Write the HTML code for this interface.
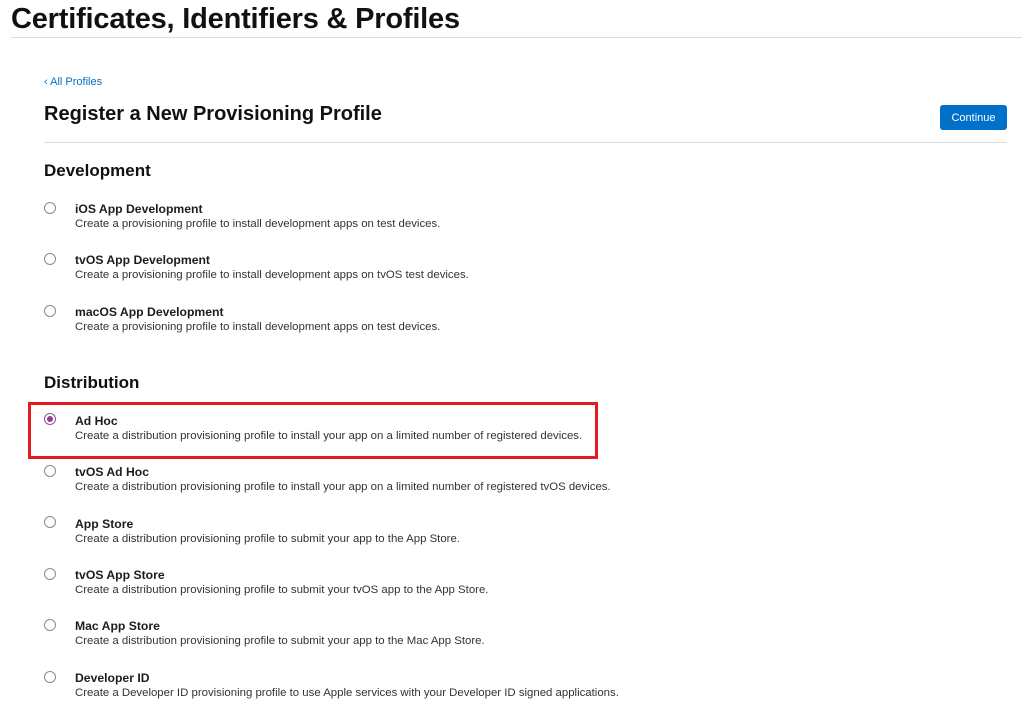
<!DOCTYPE html>
<html><head><meta charset="utf-8"><style>
body{margin:0;width:1024px;height:712px;background:#fff;font-family:"Liberation Sans",Arial,sans-serif;color:#111;position:relative;overflow:hidden}
.a{position:absolute;white-space:nowrap}
.h1{left:11px;top:3px;font-size:29px;font-weight:bold;letter-spacing:-0.2px}
.t{font-size:12.2px;font-weight:bold;color:#1d1d1f;margin-top:1px}
.d{font-size:11.4px;color:#333}
.r{position:absolute;left:44px;width:10px;height:10px;border:1px solid #8a8a8a;border-radius:50%;background:#fff}
.sec{font-size:17px;font-weight:bold}
</style></head><body>
<div class="a h1">Certificates, Identifiers &amp; Profiles</div>
<div class="a" style="left:11px;top:37px;width:1011px;height:1px;background:#ddd"></div>
<div class="a" style="left:44px;top:76px;font-size:11px;color:#0070c9">‹ All Profiles</div>
<div class="a" style="left:44px;top:103px;font-size:20px;font-weight:bold">Register a New Provisioning Profile</div>
<div class="a" style="left:940px;top:105px;width:67px;height:25px;background:#0070c9;border-radius:3px;color:#fff;font-size:11px;line-height:27px;text-align:center">Continue</div>
<div class="a" style="left:44px;top:142px;width:963px;height:1px;background:#ddd"></div>
<div class="a sec" style="left:44px;top:161px">Development</div>

<div class="r" style="top:202px"></div>
<div class="a t" style="left:75px;top:201px">iOS App Development</div>
<div class="a d" style="left:75px;top:218px">Create a provisioning profile to install development apps on test devices.</div>

<div class="r" style="top:253px"></div>
<div class="a t" style="left:75px;top:252px">tvOS App Development</div>
<div class="a d" style="left:75px;top:269px">Create a provisioning profile to install development apps on tvOS test devices.</div>

<div class="r" style="top:305px"></div>
<div class="a t" style="left:75px;top:304px">macOS App Development</div>
<div class="a d" style="left:75px;top:321px">Create a provisioning profile to install development apps on test devices.</div>

<div class="a sec" style="left:44px;top:373px">Distribution</div>

<div class="a" style="left:28px;top:402px;width:564px;height:51px;border:3px solid #e31b23"></div>
<div class="r" style="top:413px;border-color:#9b4f9b"><div style="position:absolute;left:2px;top:2px;width:6px;height:6px;border-radius:50%;background:#8e3e8e"></div></div>
<div class="a t" style="left:75px;top:413px">Ad Hoc</div>
<div class="a d" style="left:75px;top:430px">Create a distribution provisioning profile to install your app on a limited number of registered devices.</div>

<div class="r" style="top:465px"></div>
<div class="a t" style="left:75px;top:464px">tvOS Ad Hoc</div>
<div class="a d" style="left:75px;top:481px">Create a distribution provisioning profile to install your app on a limited number of registered tvOS devices.</div>

<div class="r" style="top:516px"></div>
<div class="a t" style="left:75px;top:516px">App Store</div>
<div class="a d" style="left:75px;top:533px">Create a distribution provisioning profile to submit your app to the App Store.</div>

<div class="r" style="top:568px"></div>
<div class="a t" style="left:75px;top:567px">tvOS App Store</div>
<div class="a d" style="left:75px;top:584px">Create a distribution provisioning profile to submit your tvOS app to the App Store.</div>

<div class="r" style="top:619px"></div>
<div class="a t" style="left:75px;top:618px">Mac App Store</div>
<div class="a d" style="left:75px;top:635px">Create a distribution provisioning profile to submit your app to the Mac App Store.</div>

<div class="r" style="top:671px"></div>
<div class="a t" style="left:75px;top:670px">Developer ID</div>
<div class="a d" style="left:75px;top:687px">Create a Developer ID provisioning profile to use Apple services with your Developer ID signed applications.</div>
</body></html>
